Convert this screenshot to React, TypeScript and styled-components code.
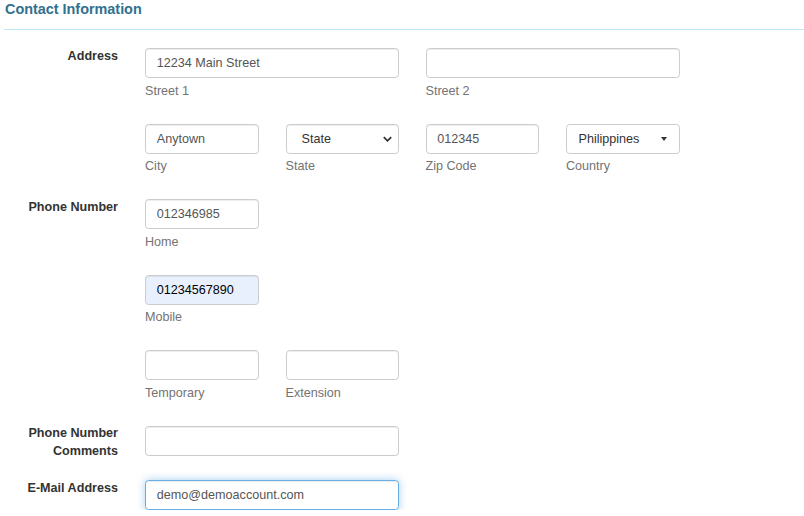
import React, { useEffect, useRef } from "react";
import styled, { createGlobalStyle, css } from "styled-components";

const GlobalStyle = createGlobalStyle`
  html, body { margin: 0; padding: 0; background: #fff; }
  body {
    font-family: "Liberation Sans", Arial, sans-serif;
    font-size: 12.6px;
    line-height: 18px;
    color: #333;
  }
  * { box-sizing: border-box; }
`;

const Page = styled.div`
  width: 804px;
  padding-left: 4px;
`;

const Header = styled.div`
  height: 30px;
  border-bottom: 1px solid #bce8f1;
`;

const Title = styled.h4`
  margin: 0;
  padding-left: 1px;
  font-size: 14.4px;
  line-height: 18px;
  font-weight: bold;
  color: #31708f;
`;

const Form = styled.form`
  display: flex;
  flex-direction: column;
  padding-top: 18px;
`;

const FieldGroup = styled.div<{ $bottom?: number }>`
  display: grid;
  grid-template-columns: 114px 535px;
  column-gap: 27px;
  margin-bottom: ${(p) => p.$bottom ?? 0}px;
`;

const GroupLabel = styled.label`
  margin-top: -1.5px;
  text-align: right;
  font-weight: bold;
  color: #333;
  line-height: 18px;
`;

const Rows = styled.div`
  display: flex;
  flex-direction: column;
`;

const SubRow = styled.div`
  display: grid;
  grid-template-columns: 113.5px 113px 113.5px 113.5px;
  column-gap: 27px;
`;

const Field = styled.div<{ $span?: number; $help?: boolean }>`
  grid-column: span ${(p) => p.$span ?? 1};
  display: flex;
  flex-direction: column;
  ${(p) => p.$help && css`margin-bottom: 24px;`}
`;

const controlBase = css`
  height: 30px;
  width: 100%;
  border: 1px solid #ccc;
  border-radius: 3.6px;
  background: #fff;
  font-family: "Liberation Sans", Arial, sans-serif;
  font-size: 12.6px;
  color: #555;
  box-shadow: inset 0 1px 1px rgba(0, 0, 0, 0.075);
  outline: none;
`;

const TextInput = styled.input<{ $autofill?: boolean; $focused?: boolean }>`
  ${controlBase}
  padding: 0 10.8px;
  ${(p) =>
    p.$autofill &&
    css`
      background: #e8f0fe;
      color: #000;
    `}
  ${(p) =>
    p.$focused &&
    css`
      border-color: #66afe9;
      box-shadow: inset 0 1px 1px rgba(0, 0, 0, 0.075), 0 0 8px rgba(102, 175, 233, 0.6);
      caret-color: #000;
    `}
`;

const SelectWrap = styled.div`
  position: relative;
`;

const NativeSelect = styled.select`
  ${controlBase}
  appearance: none;
  -webkit-appearance: none;
  padding: 0 24px 0 15px;
  color: #333;
`;

const PickerButton = styled.button`
  ${controlBase}
  display: flex;
  align-items: center;
  justify-content: space-between;
  padding: 0 12px 0 11.5px;
  color: #333;
  box-shadow: none;
  text-align: left;
  cursor: pointer;
`;

const Chevron = styled.svg`
  position: absolute;
  right: 6px;
  top: 10px;
  pointer-events: none;
`;

const Caret = styled.span`
  width: 0;
  height: 0;
  border-top: 4px solid #333;
  border-left: 3.6px solid transparent;
  border-right: 3.6px solid transparent;
  margin-top: 1px;
`;

const Help = styled.span`
  margin-top: 3.5px;
  line-height: 18px;
  color: #737373;
`;

export default function App() {
  const emailRef = useRef<HTMLInputElement>(null);
  useEffect(() => {
    const el = emailRef.current;
    if (el) {
      el.focus();
      const n = el.value.length;
      el.setSelectionRange(n, n);
    }
  }, []);

  return (
    <>
      <GlobalStyle />
      <Page>
        <Header>
          <Title>Contact Information</Title>
        </Header>
        <Form onSubmit={(e) => e.preventDefault()}>
          <FieldGroup>
            <GroupLabel>Address</GroupLabel>
            <Rows>
              <SubRow>
                <Field $span={2} $help>
                  <TextInput defaultValue="12234 Main Street" />
                  <Help>Street 1</Help>
                </Field>
                <Field $span={2} $help>
                  <TextInput defaultValue="" />
                  <Help>Street 2</Help>
                </Field>
              </SubRow>
              <SubRow>
                <Field $help>
                  <TextInput defaultValue="Anytown" />
                  <Help>City</Help>
                </Field>
                <Field $help>
                  <SelectWrap>
                    <NativeSelect defaultValue="State">
                      <option>State</option>
                    </NativeSelect>
                    <Chevron width="11" height="10" viewBox="0 0 11 10">
                      <path d="M1.8 3.2 L5.5 6.8 L9.2 3.2" fill="none" stroke="#333" strokeWidth="1.8" />
                    </Chevron>
                  </SelectWrap>
                  <Help>State</Help>
                </Field>
                <Field $help>
                  <TextInput defaultValue="012345" />
                  <Help>Zip Code</Help>
                </Field>
                <Field $help>
                  <PickerButton type="button">
                    <span>Philippines</span>
                    <Caret />
                  </PickerButton>
                  <Help>Country</Help>
                </Field>
              </SubRow>
            </Rows>
          </FieldGroup>

          <FieldGroup>
            <GroupLabel>Phone Number</GroupLabel>
            <Rows>
              <SubRow>
                <Field $help>
                  <TextInput defaultValue="012346985" />
                  <Help>Home</Help>
                </Field>
              </SubRow>
              <SubRow>
                <Field $help>
                  <TextInput $autofill defaultValue="01234567890" />
                  <Help>Mobile</Help>
                </Field>
              </SubRow>
              <SubRow>
                <Field $help>
                  <TextInput defaultValue="" />
                  <Help>Temporary</Help>
                </Field>
                <Field $help>
                  <TextInput defaultValue="" />
                  <Help>Extension</Help>
                </Field>
              </SubRow>
            </Rows>
          </FieldGroup>

          <FieldGroup $bottom={20}>
            <GroupLabel>
              Phone Number
              <br />
              Comments
            </GroupLabel>
            <Rows>
              <SubRow>
                <Field $span={2}>
                  <TextInput defaultValue="" />
                </Field>
              </SubRow>
            </Rows>
          </FieldGroup>

          <FieldGroup>
            <GroupLabel>E-Mail Address</GroupLabel>
            <Rows>
              <SubRow>
                <Field $span={2}>
                  <TextInput ref={emailRef} $focused defaultValue="demo@demoaccount.com" />
                </Field>
              </SubRow>
            </Rows>
          </FieldGroup>
        </Form>
      </Page>
    </>
  );
}
